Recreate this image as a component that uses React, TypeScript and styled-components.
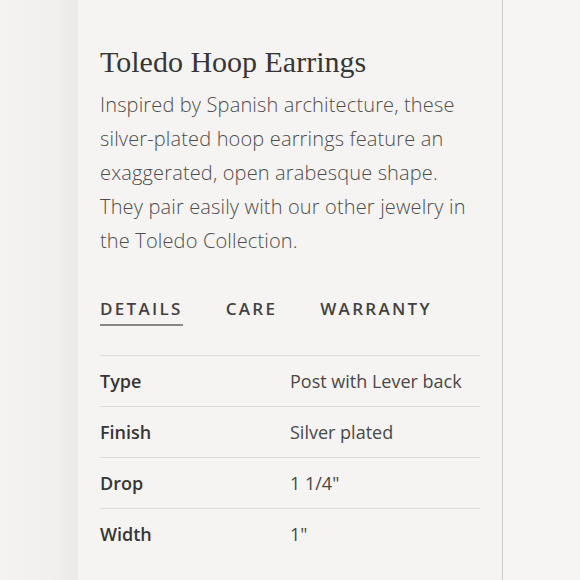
import React from "react";
import styled, { createGlobalStyle } from "styled-components";

const GlobalStyle = createGlobalStyle`
  html, body {
    margin: 0;
    padding: 0;
    background: #f4f3f2;
  }
`;

const Page = styled.div`
  display: flex;
  height: 580px;
  overflow: hidden;
  background: linear-gradient(90deg, #f4f3f2 0px, #f1f0ef 50px, #ebeae9 78px, #f6f5f4 78px);
`;

const Panel = styled.section`
  box-sizing: border-box;
  width: 425px;
  margin-left: 78px;
  padding: 44px 22px 0;
  background: #f5f4f2;
  border-right: 1px solid #cdcbc8;
`;

const Title = styled.h1`
  margin: 0;
  font-family: "Liberation Serif", serif;
  font-weight: 400;
  font-size: 30px;
  line-height: 36px;
  color: #383634;
`;

const Description = styled.p`
  margin: 8px 0 0;
  font-family: "Open Sans", sans-serif;
  font-weight: 300;
  font-size: 20px;
  letter-spacing: 0.15px;
  line-height: 34px;
  color: #4f4d4d;
`;

const Tabs = styled.nav`
  display: flex;
  gap: 43px;
  margin-top: 38px;
`;

const Tab = styled.span<{ $active?: boolean }>`
  font-family: "Open Sans", sans-serif;
  font-weight: 600;
  font-size: 17px;
  letter-spacing: 2.3px;
  line-height: 26px;
  color: #434140;
  padding-bottom: 2px;
  border-bottom: 2px solid ${(p) => (p.$active ? "#8a8886" : "transparent")};
`;

const Specs = styled.dl`
  margin: 29px 0 0;
  border-top: 1px solid #dedcd9;
`;

const Row = styled.div`
  display: grid;
  grid-template-columns: 190px 1fr;
  align-items: center;
  height: 50px;
  border-bottom: 1px solid #dedcd9;

  &:last-child {
    border-bottom: none;
  }
`;

const Label = styled.dt`
  font-family: "Open Sans", sans-serif;
  font-weight: 600;
  font-size: 18px;
  color: #383634;
`;

const Value = styled.dd`
  margin: 0;
  font-family: "Open Sans", sans-serif;
  font-weight: 400;
  font-size: 18px;
  color: #4a4846;
`;

const specs = [
  { label: "Type", value: "Post with Lever back" },
  { label: "Finish", value: "Silver plated" },
  { label: "Drop", value: "1 1/4\"" },
  { label: "Width", value: "1\"" },
];

export default function App() {
  return (
    <>
      <GlobalStyle />
      <Page>
        <Panel>
          <Title>Toledo Hoop Earrings</Title>
          <Description>
            Inspired by Spanish architecture, these silver-plated hoop earrings feature an
            exaggerated, open arabesque shape. They pair easily with our other jewelry in
            the Toledo Collection.
          </Description>
          <Tabs>
            <Tab $active>DETAILS</Tab>
            <Tab>CARE</Tab>
            <Tab>WARRANTY</Tab>
          </Tabs>
          <Specs>
            {specs.map((s) => (
              <Row key={s.label}>
                <Label>{s.label}</Label>
                <Value>{s.value}</Value>
              </Row>
            ))}
          </Specs>
        </Panel>
      </Page>
    </>
  );
}
